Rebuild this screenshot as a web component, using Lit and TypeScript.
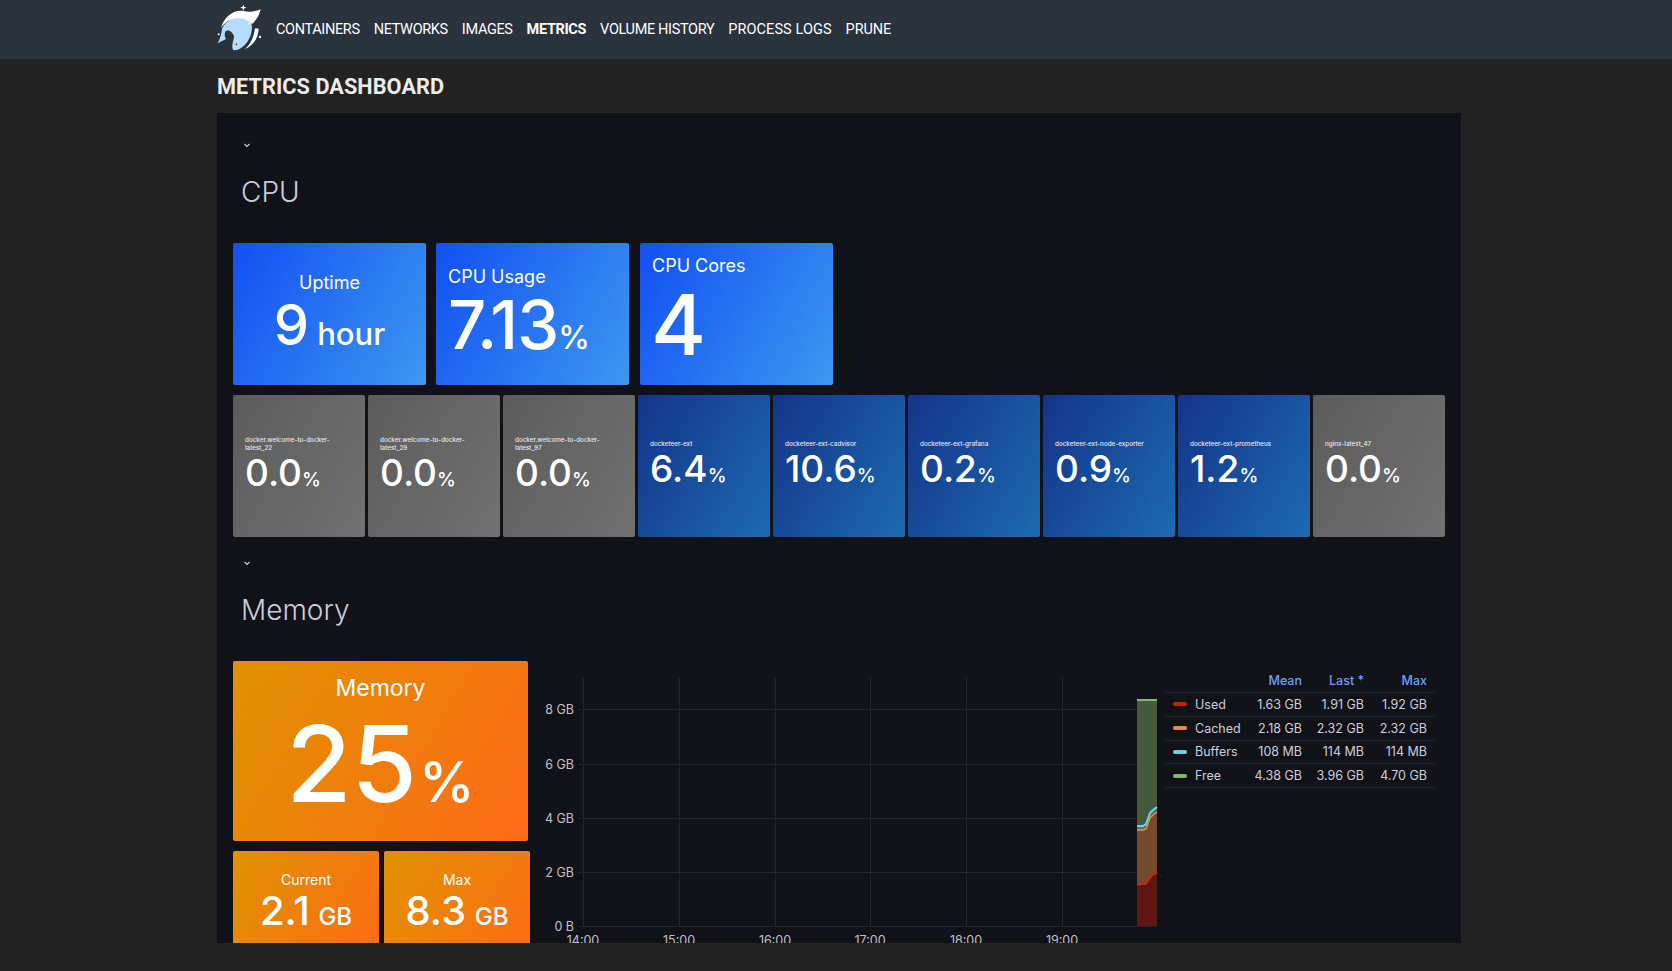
import { LitElement, html, css, svg } from "lit";
import { customElement } from "lit/decorators.js";

const NAV = ["CONTAINERS", "NETWORKS", "IMAGES", "METRICS", "VOLUME HISTORY", "PROCESS LOGS", "PRUNE"];
const TILES: [string, string, boolean][] = [
  ["docker.welcome-to-docker-latest_22", "0.0", false],
  ["docker.welcome-to-docker-latest_29", "0.0", false],
  ["docker.welcome-to-docker-latest_97", "0.0", false],
  ["docketeer-ext", "6.4", true],
  ["docketeer-ext-cadvisor", "10.6", true],
  ["docketeer-ext-grafana", "0.2", true],
  ["docketeer-ext-node-exporter", "0.9", true],
  ["docketeer-ext-prometheus", "1.2", true],
  ["nginx-latest_47", "0.0", false],
];
const LEGEND = [
  ["Used", "#c4210f", "1.63 GB", "1.91 GB", "1.92 GB"],
  ["Cached", "#f2884a", "2.18 GB", "2.32 GB", "2.32 GB"],
  ["Buffers", "#73d0e4", "108 MB", "114 MB", "114 MB"],
  ["Free", "#8ab56e", "4.38 GB", "3.96 GB", "4.70 GB"],
];

const XS = [1137, 1143, 1146, 1150, 1153, 1157];
const USED = [885, 884, 884, 878, 875, 873];
const CACHED = [830, 830, 829, 818, 815, 812];
const BUFFERS = [826, 826, 824, 813, 810, 807];
const FREE = [700, 700, 700, 700, 700, 700];
const line = (ys: number[]) => XS.map((x, i) => `${x} ${ys[i]}`).join(" L");
const band = (top: number[], bottom: number[]) =>
  `M${line(top)} L${XS.map((x, i) => `${x} ${bottom[i]}`).reverse().join(" L")} Z`;
const FLOOR = XS.map(() => 926);

const logo = svg`
  <path fill="#b5dcfb" d="M50 92C54 72 76 54 100 52C122 50 137 58 140 74C144 96 133 122 117 137C107 146 96 152 84 150C79 136 85 124 87 110C84 97 72 88 63 93C57 99 59 110 63 117L38 130C44 118 48 106 50 92Z"/>
  <path fill="#fff" d="M48 84C56 52 85 28 115 33C130 36 146 37 167 28C162 50 152 62 141 72C130 60 112 53 96 55C76 57 60 66 48 84Z"/>
  <path fill="#fff" d="M118 148C135 137 146 114 150 85L161 86C160 112 146 138 118 148Z"/>
  <path fill="#fff" d="M115 14L117.500 20.500L124 23L117.500 25.500L115 32L112.500 25.500L106 23L112.500 20.500Z"/>
  <circle cx="41" cy="103" r="3" fill="#fff"/>
  <circle cx="165" cy="111" r="3.500" fill="#fff"/>
  <circle cx="133" cy="71" r="2.500" fill="#fff"/>
  <circle cx="94" cy="133" r="2.500" fill="#23303c"/>
`;

@customElement("app-root")
export class AppRoot extends LitElement {
  static styles = css`
    :host { display: block; height: 971px; background: #222; overflow: hidden; font-family: Inter, "Liberation Sans", sans-serif; }
    .nav { height: 59px; background: #2a323c; display: flex; align-items: center; padding-left: 217px; }
    .logo { width: 46px; height: 60px; margin-right: 13px; flex: none; }
    .links { display: flex; gap: 14px; margin-top: -1px; }
    .links a { font: 400 14.500px Roboto, sans-serif; color: #fff; letter-spacing: -0.35px; }
    .links a.active { font-weight: 700; }
    .links a:nth-child(6) { letter-spacing: 0.08px; }
    .links a:nth-child(7) { letter-spacing: -0.1px; }
    .title { margin: 0; height: 54px; padding: 1px 0 0 217px; box-sizing: border-box; display: flex; align-items: center; font: 700 21.700px Roboto, sans-serif; color: #ececec; letter-spacing: 0.05px; }
    .panel { margin-left: 217px; width: 1244px; height: 830px; background: #111217; overflow: hidden; padding: 6px 16px 0; box-sizing: border-box; color: #ccccdc; }
    .head { height: 124px; display: flex; flex-direction: column; padding-left: 8px; box-sizing: border-box; }
    .head svg { width: 10px; height: 10px; margin: 21px 0 0 1px; display: block; }
    .head h2 { margin: 25px 0 0; font: 300 28px/34px Inter, sans-serif; color: #ccccdc; }
    .stat { border-radius: 2px; color: #fff; display: flex; flex-direction: column; justify-content: center; box-sizing: border-box; }
    .blue { background: linear-gradient(120deg, #124ff2, #3d98f0); }
    .deep { background: linear-gradient(120deg, #14348a, #1c6ab0); }
    .grey { background: linear-gradient(120deg, #5c5c5c, #717171); }
    .orange { background: linear-gradient(120deg, #e09200, #ff6a18); }
    .top { display: grid; grid-template-columns: 193px 193px 194px; gap: 10px; height: 142px; }
    .top .stat { padding: 0 12px; }
    .top .stat:nth-child(3) { margin-left: 1px; }
    .lbl18 { font-size: 18px; line-height: 22px; }
    .center { align-items: center; text-align: center; }
    .top .up { padding-top: 8px; }
    .num55 { font-size: 56px; line-height: 62px; font-weight: 500; }
    .num55 small { font-size: 31px; margin-left: 8px; }
    .top .usage { padding-top: 12px; }
    .num63 { font-size: 67px; line-height: 73px; font-weight: 500; letter-spacing: -1px; }
    .num63 small { font-size: 32px; letter-spacing: 0; margin-left: 0; }
    .top .cores { padding-bottom: 1px; }
    .num82 { font-size: 84px; line-height: 95px; font-weight: 500; margin-left: -1px; }
    .row { display: grid; grid-template-columns: repeat(9, 132px); gap: 3px; margin-top: 10px; height: 142px; }
    .tile { padding: 6px 10px 0 12px; }
    .tile .name { font-size: 6.300px; line-height: 8px; font-weight: 500; color: #e6e6ee; max-width: 94px; }
    .tile .val { font-size: 37px; line-height: 45px; font-weight: 500; margin-top: -2px; }
    .tile .val small { font-size: 19px; }
    .mem { display: grid; grid-template-columns: 300px 632px 270px; align-items: start; }
    .left { width: 297px; }
    .big { width: 295px; height: 180px; padding-top: 14px; }
    .big .lbl { font-size: 23px; line-height: 30px; }
    .big .val { font-size: 106px; line-height: 122px; font-weight: 500; }
    .big .val small { font-size: 56px; margin-left: 2px; }
    .pair { display: grid; grid-template-columns: 146px 146px; gap: 5px; margin-top: 10px; }
    .small { height: 130px; justify-content: flex-start; padding-top: 20px; }
    .small .lbl { font-size: 14px; line-height: 17px; }
    .small .val { font-size: 40px; line-height: 46px; font-weight: 500; }
    .small .val small { font-size: 24px; margin-left: -2px; }
    .chart { display: block; width: 632px; height: 282px; }
    .chart text { font: 12.500px Inter, sans-serif; fill: #c0c0cc; }
    table { border-collapse: collapse; table-layout: fixed; width: 270px; margin-top: 7px; font-size: 12.500px; color: #ccccdc; }
    col.c0 { width: 83px; }
    col.c1 { width: 62px; }
    col.c2 { width: 63px; }
    th { font-weight: 500; color: #6e9fff; text-align: right; padding: 0 8px 0 0; height: 24px; }
    td { text-align: right; padding: 0 8px 0 0; height: 23.750px; border-top: 1px solid #26272c; box-sizing: border-box; }
    tr:last-child td { border-bottom: 1px solid #26272c; }
    td.n { text-align: left; padding-left: 8px; white-space: nowrap; }
    td.n i { display: inline-block; width: 14px; height: 4px; border-radius: 2px; margin-right: 8px; vertical-align: middle; position: relative; top: -1px; }
  `;

  private chevron() {
    return html`<svg viewBox="0 0 10 10"><path d="M2.500 4L5 6.500L7.500 4" fill="none" stroke="#ccccdc" stroke-width="1.200"/></svg>`;
  }

  private chart() {
    const gridY = [709, 764, 818, 872, 926];
    const labels = ["8 GB", "6 GB", "4 GB", "2 GB", "0 B"];
    const gridX = [583, 679, 775, 870, 966, 1062];
    const times = ["14:00", "15:00", "16:00", "17:00", "18:00", "19:00"];
    return html`<svg class="chart" viewBox="533 661 632 282">
      ${gridY.map((y, i) => svg`
        <line x1="578" x2="1157" y1=${y + 0.5} y2=${y + 0.5} stroke="#24252b"/>
        <text x="574" y=${y + 5} text-anchor="end">${labels[i]}</text>`)}
      ${gridX.map((x, i) => svg`
        <line x1=${x + 0.5} x2=${x + 0.5} y1="678" y2="926" stroke="#24252b"/>
        <text x=${x} y="945" text-anchor="middle">${times[i]}</text>`)}
      <path d=${band(USED, FLOOR)} fill="#5e1610"/>
      <path d=${band(CACHED, USED)} fill="#754a2c"/>
      <path d=${band(BUFFERS, CACHED)} fill="#4f6f78"/>
      <path d=${band(FREE, BUFFERS)} fill="#445a3b"/>
      <path d="M${line(USED)}" fill="none" stroke="#d4260f" stroke-width="1.500"/>
      <path d="M${line(CACHED)}" fill="none" stroke="#f2884a" stroke-width="1.500"/>
      <path d="M${line(BUFFERS)}" fill="none" stroke="#73d0e4" stroke-width="2"/>
      <path d="M${line(FREE)}" fill="none" stroke="#8ab56e" stroke-width="2"/>
    </svg>`;
  }

  render() {
    return html`
      <nav class="nav">
        <svg class="logo" viewBox="36 0 138 180">${logo}</svg>
        <div class="links">
          ${NAV.map((n) => html`<a class=${n === "METRICS" ? "active" : ""}>${n}</a>`)}
        </div>
      </nav>
      <h1 class="title">METRICS DASHBOARD</h1>
      <div class="panel">
        <div class="head">${this.chevron()}<h2>CPU</h2></div>
        <div class="top">
          <div class="stat blue center up">
            <div class="lbl18">Uptime</div>
            <div class="num55">9<small>hour</small></div>
          </div>
          <div class="stat blue usage">
            <div class="lbl18">CPU Usage</div>
            <div class="num63">7.13<small>%</small></div>
          </div>
          <div class="stat blue cores">
            <div class="lbl18">CPU Cores</div>
            <div class="num82">4</div>
          </div>
        </div>
        <div class="row">
          ${TILES.map(([n, v, on]) => html`
            <div class="stat tile ${on ? "deep" : "grey"}">
              <div class="name">${n}</div>
              <div class="val">${v}<small>%</small></div>
            </div>`)}
        </div>
        <div class="head">${this.chevron()}<h2>Memory</h2></div>
        <div class="mem">
          <div class="left">
            <div class="stat orange center big">
              <div class="lbl">Memory</div>
              <div class="val">25<small>%</small></div>
            </div>
            <div class="pair">
              <div class="stat orange center small">
                <div class="lbl">Current</div>
                <div class="val">2.1 <small>GB</small></div>
              </div>
              <div class="stat orange center small">
                <div class="lbl">Max</div>
                <div class="val">8.3 <small>GB</small></div>
              </div>
            </div>
          </div>
          ${this.chart()}
          <table>
            <colgroup><col class="c0" /><col class="c1" /><col class="c1" /><col class="c2" /></colgroup>
            <thead><tr><th></th><th>Mean</th><th>Last *</th><th>Max</th></tr></thead>
            <tbody>
              ${LEGEND.map(([n, c, a, b, d]) => html`<tr>
                <td class="n"><i style="background:${c}"></i>${n}</td><td>${a}</td><td>${b}</td><td>${d}</td>
              </tr>`)}
            </tbody>
          </table>
        </div>
      </div>
    `;
  }
}
